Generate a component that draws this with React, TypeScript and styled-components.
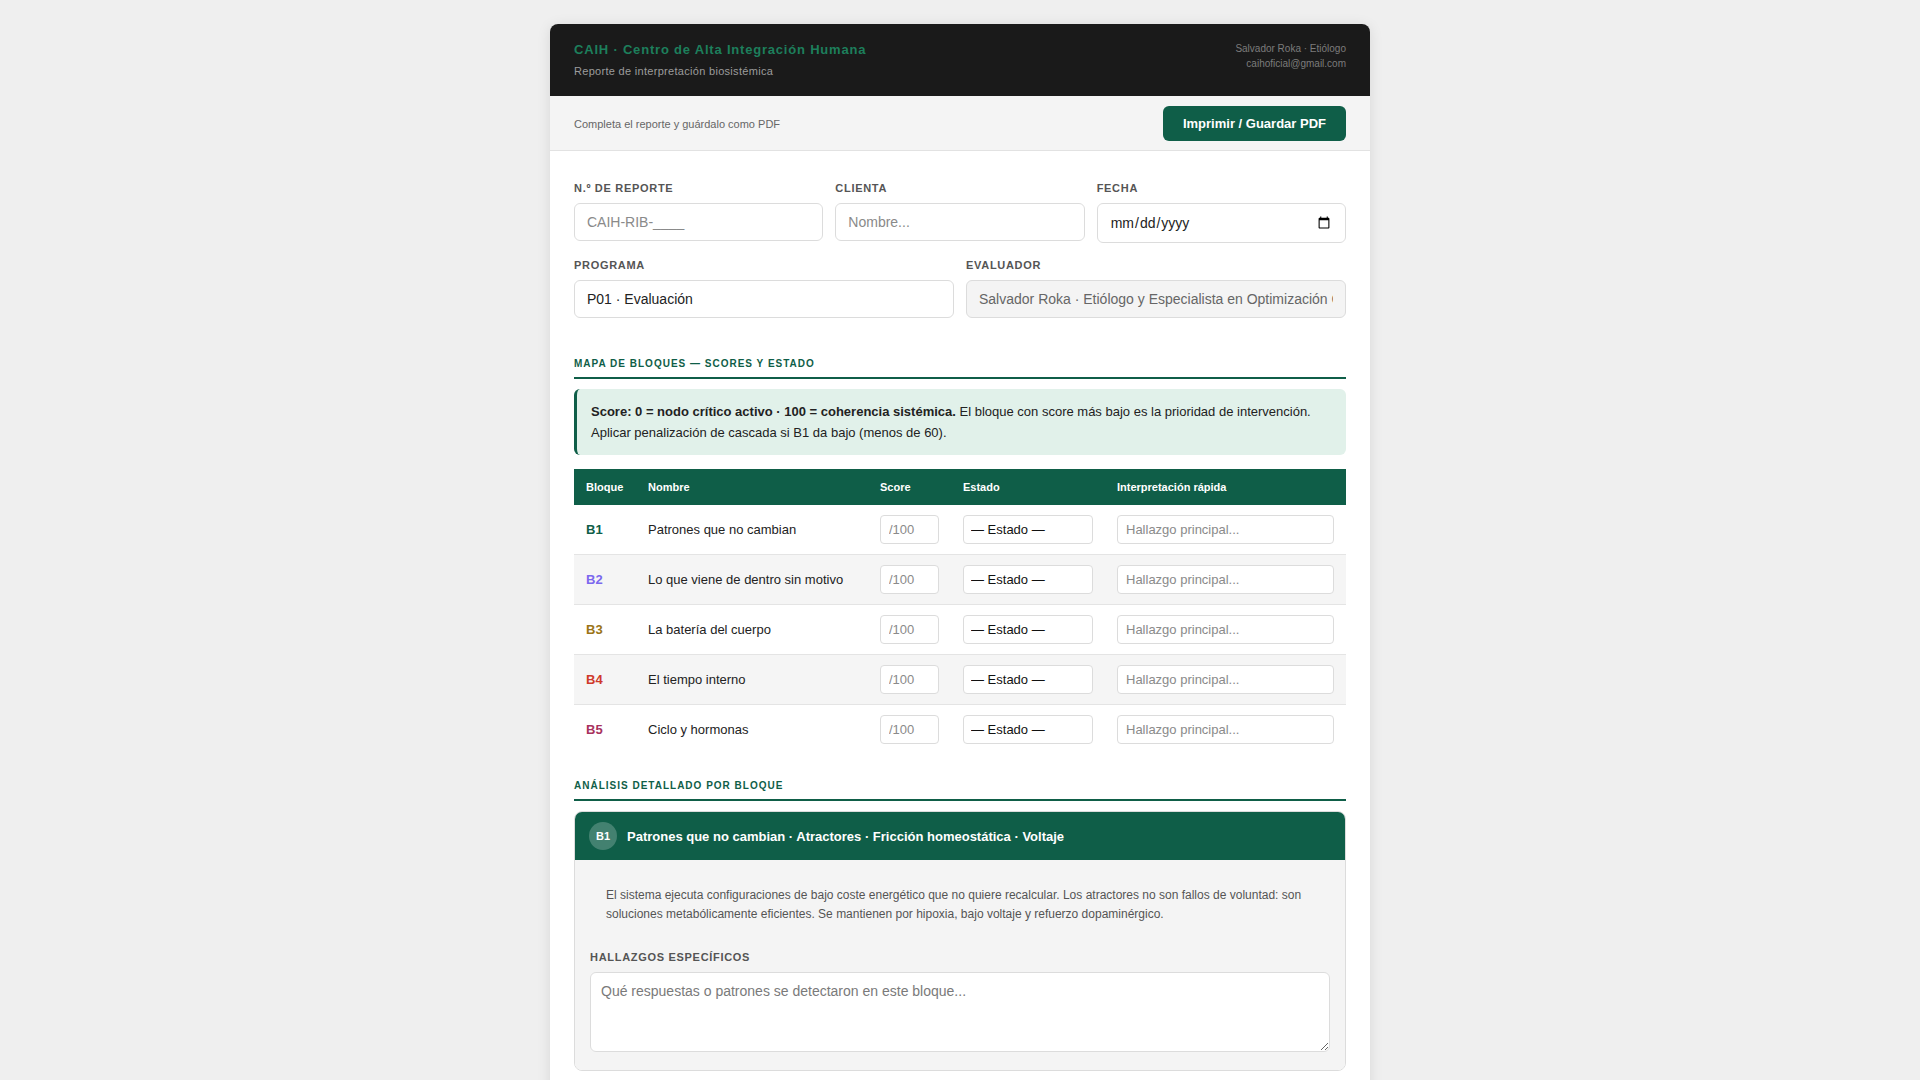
import React from "react";
import styled, { createGlobalStyle } from "styled-components";

const GlobalStyle = createGlobalStyle`
  * { box-sizing: border-box; }
  body {
    margin: 0;
    background: #efefef;
    font-family: "Liberation Sans", Arial, Helvetica, sans-serif;
    color: #222;
  }
`;

const Page = styled.div`
  padding: 24px 0 40px;
`;

const Sheet = styled.div`
  width: 820px;
  margin: 0 auto;
  background: #fff;
  border-radius: 8px;
  overflow: hidden;
  box-shadow: 0 2px 14px rgba(0, 0, 0, 0.1);
`;

const Header = styled.header`
  background: #1a1a1a;
  padding: 18px 24px;
  display: flex;
  justify-content: space-between;
  align-items: flex-start;
`;

const Brand = styled.div`
  display: flex;
  flex-direction: column;
  gap: 6px;
`;

const BrandTitle = styled.div`
  color: #1d7f5c;
  font-size: 13px;
  line-height: 16px;
  font-weight: 700;
  letter-spacing: 0.8px;
`;

const BrandSub = styled.div`
  color: #9c9c9c;
  font-size: 11px;
  line-height: 14px;
  letter-spacing: 0.3px;
`;

const Contact = styled.div`
  margin-top: -1px;
  text-align: right;
  color: #7c7c7c;
  font-size: 10px;
  line-height: 15px;
`;

const Toolbar = styled.div`
  background: #f4f4f4;
  border-bottom: 1px solid #e2e2e2;
  padding: 10px 24px 9px;
  display: flex;
  justify-content: space-between;
  align-items: center;
`;

const Hint = styled.span`
  font-size: 11px;
  color: #666;
`;

const PrintButton = styled.button`
  background: #0f5e48;
  color: #fff;
  border: none;
  border-radius: 6px;
  font-family: inherit;
  font-size: 13px;
  font-weight: 700;
  height: 35px;
  padding: 0 20px;
  cursor: pointer;
`;

const Content = styled.main`
  padding: 29px 24px 40px;
`;

const FormGrid = styled.div<{ $cols: number }>`
  display: grid;
  grid-template-columns: repeat(${(p) => p.$cols}, 1fr);
  gap: 12px;
  margin-bottom: 14px;
`;

const Field = styled.div`
  display: flex;
  flex-direction: column;
`;

const Label = styled.label`
  font-size: 11px;
  line-height: 16px;
  font-weight: 700;
  letter-spacing: 0.7px;
  text-transform: uppercase;
  color: #555;
  margin-bottom: 7px;
`;

const TextInput = styled.input<{ $readonly?: boolean }>`
  width: 100%;
  font-family: inherit;
  font-size: 14px;
  padding: 10px 12px;
  border: 1px solid #dcdcdc;
  border-radius: 6px;
  background: ${(p) => (p.$readonly ? "#f4f4f4" : "#fff")};
  color: ${(p) => (p.$readonly ? "#666" : "#222")};
  outline: none;
  &::placeholder { color: #8a8a8a; }
`;

const SectionTitle = styled.h2<{ $top: number }>`
  margin: ${(p) => p.$top}px 0 10px;
  padding-bottom: 6px;
  border-bottom: 2px solid #0f5e48;
  font-size: 10px;
  line-height: 14px;
  font-weight: 700;
  letter-spacing: 1px;
  text-transform: uppercase;
  color: #0f5e48;
`;

const InfoBox = styled.div`
  background: #e1f1ea;
  border-left: 3px solid #0f5e48;
  border-radius: 6px;
  padding: 12px 14px;
  font-size: 13px;
  line-height: 21px;
  color: #222;
  margin-bottom: 14px;
`;

const Table = styled.table`
  width: 100%;
  border-collapse: collapse;
  table-layout: fixed;
`;

const Th = styled.th<{ $w: number }>`
  width: ${(p) => p.$w}px;
  background: #0f5e48;
  color: #fff;
  text-align: left;
  font-size: 11px;
  font-weight: 700;
  height: 36px;
  padding: 0 12px;
`;

const Tr = styled.tr<{ $alt: boolean }>`
  background: ${(p) => (p.$alt ? "#f5f5f5" : "#fff")};
  border-bottom: 1px solid #e4e4e4;
  &:last-child { border-bottom: none; }
`;

const Td = styled.td`
  padding: 10px 12px;
  font-size: 13px;
  color: #222;
  vertical-align: middle;
`;

const Code = styled.span<{ $color: string }>`
  font-weight: 700;
  color: ${(p) => p.$color};
`;

const CellInput = styled.input`
  width: 100%;
  height: 29px;
  font-family: inherit;
  font-size: 13px;
  padding: 0 8px;
  border: 1px solid #dcdcdc;
  border-radius: 4px;
  background: #fff;
  outline: none;
  &::placeholder { color: #8a8a8a; }
`;

const CellSelect = styled.select`
  width: 100%;
  height: 29px;
  font-family: inherit;
  font-size: 13px;
  padding: 0 7px;
  border: 1px solid #dcdcdc;
  border-radius: 4px;
  background: #fff;
  color: #111;
  appearance: none;
  outline: none;
`;

const Card = styled.section`
  border: 1px solid #dcdcdc;
  border-radius: 8px;
  overflow: hidden;
  margin-bottom: 16px;
`;

const CardHead = styled.div`
  background: #0f5e48;
  height: 48px;
  padding: 0 14px;
  display: flex;
  align-items: center;
  gap: 10px;
`;

const Badge = styled.span`
  width: 28px;
  height: 28px;
  border-radius: 50%;
  background: rgba(255, 255, 255, 0.22);
  color: #fff;
  font-size: 11px;
  font-weight: 700;
  display: flex;
  align-items: center;
  justify-content: center;
`;

const CardTitle = styled.span`
  color: #fff;
  font-size: 13px;
  font-weight: 700;
`;

const CardBody = styled.div`
  background: #f4f4f4;
  padding: 16px 15px 18px;
`;

const Description = styled.p`
  margin: 0 0 15px;
  padding: 10px 16px;
  font-size: 12px;
  line-height: 19px;
  color: #555;
`;

const TextArea = styled.textarea`
  display: block;
  width: 100%;
  height: 80px;
  font-family: inherit;
  font-size: 14px;
  padding: 10px 10px;
  border: 1px solid #dcdcdc;
  border-radius: 6px;
  background: #fff;
  resize: vertical;
  outline: none;
  &::placeholder { color: #7a7a7a; }
`;

const blocks = [
  { code: "B1", name: "Patrones que no cambian", color: "#0f5e48",
    title: "Patrones que no cambian · Atractores · Fricción homeostática · Voltaje",
    desc: "El sistema ejecuta configuraciones de bajo coste energético que no quiere recalcular. Los atractores no son fallos de voluntad: son soluciones metabólicamente eficientes. Se mantienen por hipoxia, bajo voltaje y refuerzo dopaminérgico." },
  { code: "B2", name: "Lo que viene de dentro sin motivo", color: "#7b68ee",
    title: "Lo que viene de dentro sin motivo · Señales internas · Interocepción",
    desc: "Respuestas que emergen sin un desencadenante externo claro. El sistema interpreta señales internas como amenaza y mantiene un estado de alerta de fondo." },
  { code: "B3", name: "La batería del cuerpo", color: "#9a7416",
    title: "La batería del cuerpo · Energía · Mitocondria · Reserva",
    desc: "Capacidad de producción y reserva energética del organismo. Un voltaje bajo limita la adaptación y favorece la repetición de patrones." },
  { code: "B4", name: "El tiempo interno", color: "#cf3a2b",
    title: "El tiempo interno · Ritmos circadianos · Sueño · Cronobiología",
    desc: "Sincronización de los relojes internos con el entorno. La desincronía amplifica la fricción en el resto de bloques." },
  { code: "B5", name: "Ciclo y hormonas", color: "#a8325e",
    title: "Ciclo y hormonas · Eje endocrino · Variabilidad cíclica",
    desc: "Dinámica hormonal y su impacto en energía, estado de ánimo y respuesta al estrés a lo largo del ciclo." },
];

export default function App() {
  return (
    <>
      <GlobalStyle />
      <Page>
        <Sheet>
          <Header>
            <Brand>
              <BrandTitle>CAIH · Centro de Alta Integración Humana</BrandTitle>
              <BrandSub>Reporte de interpretación biosistémica</BrandSub>
            </Brand>
            <Contact>
              <div>Salvador Roka · Etiólogo</div>
              <div>caihoficial@gmail.com</div>
            </Contact>
          </Header>
          <Toolbar>
            <Hint>Completa el reporte y guárdalo como PDF</Hint>
            <PrintButton>Imprimir / Guardar PDF</PrintButton>
          </Toolbar>
          <Content>
            <FormGrid $cols={3}>
              <Field>
                <Label>N.º de reporte</Label>
                <TextInput placeholder="CAIH-RIB-____" />
              </Field>
              <Field>
                <Label>Clienta</Label>
                <TextInput placeholder="Nombre..." />
              </Field>
              <Field>
                <Label>Fecha</Label>
                <TextInput type="date" />
              </Field>
            </FormGrid>
            <FormGrid $cols={2}>
              <Field>
                <Label>Programa</Label>
                <TextInput defaultValue="P01 · Evaluación" />
              </Field>
              <Field>
                <Label>Evaluador</Label>
                <TextInput
                  $readonly
                  readOnly
                  defaultValue="Salvador Roka · Etiólogo y Especialista en Optimización Celular"
                />
              </Field>
            </FormGrid>

            <SectionTitle $top={39}>Mapa de bloques — scores y estado</SectionTitle>
            <InfoBox>
              <strong>Score: 0 = nodo crítico activo · 100 = coherencia sistémica.</strong>{" "}
              El bloque con score más bajo es la prioridad de intervención. Aplicar penalización de
              cascada si B1 da bajo (menos de 60).
            </InfoBox>
            <Table>
              <thead>
                <tr>
                  <Th $w={62}>Bloque</Th>
                  <Th $w={232}>Nombre</Th>
                  <Th $w={83}>Score</Th>
                  <Th $w={154}>Estado</Th>
                  <Th $w={241}>Interpretación rápida</Th>
                </tr>
              </thead>
              <tbody>
                {blocks.map((b, i) => (
                  <Tr key={b.code} $alt={i % 2 === 1}>
                    <Td><Code $color={b.color}>{b.code}</Code></Td>
                    <Td>{b.name}</Td>
                    <Td><CellInput placeholder="/100" /></Td>
                    <Td>
                      <CellSelect defaultValue="">
                        <option value="">— Estado —</option>
                        <option value="critico">Crítico</option>
                        <option value="alerta">Alerta</option>
                        <option value="estable">Estable</option>
                        <option value="coherente">Coherente</option>
                      </CellSelect>
                    </Td>
                    <Td><CellInput placeholder="Hallazgo principal..." /></Td>
                  </Tr>
                ))}
              </tbody>
            </Table>

            <SectionTitle $top={25}>Análisis detallado por bloque</SectionTitle>
            {blocks.map((b) => (
              <Card key={b.code}>
                <CardHead>
                  <Badge>{b.code}</Badge>
                  <CardTitle>{b.title}</CardTitle>
                </CardHead>
                <CardBody>
                  <Description>{b.desc}</Description>
                  <Label as="div">Hallazgos específicos</Label>
                  <TextArea placeholder="Qué respuestas o patrones se detectaron en este bloque..." />
                </CardBody>
              </Card>
            ))}
          </Content>
        </Sheet>
      </Page>
    </>
  );
}
